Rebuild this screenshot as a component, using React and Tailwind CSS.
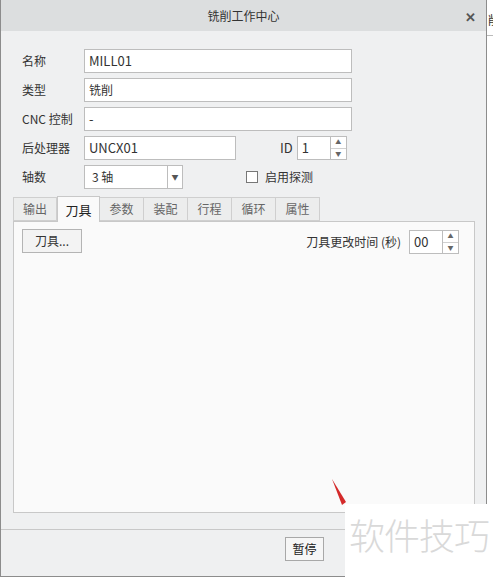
import React from 'react';

const font = { fontFamily: '"Noto Sans CJK SC", "Noto Sans", sans-serif' };

const Spinner = ({ value, width }) => (
  <div className={`flex h-[24px] border border-[#bdbdbd] bg-white ${width}`}>
    <div className="flex-1 pl-[4px] text-[13px] leading-[22px] text-[#333]">{value}</div>
    <div className="flex w-[16px] flex-col border-l border-[#bdbdbd]">
      <div className="flex flex-1 items-center justify-center border-b border-[#d0d0d0] text-[6px] leading-none text-[#666]">▲</div>
      <div className="flex flex-1 items-center justify-center text-[6px] leading-none text-[#666]">▼</div>
    </div>
  </div>
);

const Field = ({ label, children }) => (
  <div className="flex h-[24px] items-center">
    <div className="w-[83px] shrink-0 whitespace-nowrap pl-[21px] text-[12px] text-[#333]">{label}</div>
    {children}
  </div>
);

const tabs = ['输出', '刀具', '参数', '装配', '行程', '循环', '属性'];

export default function App() {
  return (
    <div className="relative h-[577px] w-[493px] overflow-hidden bg-white" style={font}>
      {/* dialog */}
      <div className="flex h-[577px] w-[487px] flex-col border-b border-l border-r border-[#8c8c8c] bg-[#eff0f1]">
        <div className="relative flex h-[31px] shrink-0 items-center justify-center bg-[#dcdedf]">
          <span className="text-[12px] text-[#333]">铣削工作中心</span>
          <span className="absolute right-[10px] top-[7px] text-[13px] font-bold text-[#555]">✕</span>
        </div>

        <div className="flex flex-col gap-[5px] pt-[18px]">
          <Field label="名称">
            <div className="h-[24px] w-[268px] border border-[#bdbdbd] bg-white pl-[4px] text-[13px] leading-[22px] text-[#333]">MILL01</div>
          </Field>
          <Field label="类型">
            <div className="h-[24px] w-[268px] border border-[#bdbdbd] bg-white pl-[4px] text-[12px] leading-[22px] text-[#333]">铣削</div>
          </Field>
          <Field label="CNC 控制">
            <div className="h-[24px] w-[268px] border border-[#bdbdbd] bg-white pl-[4px] text-[13px] leading-[22px] text-[#333]">-</div>
          </Field>
          <Field label="后处理器">
            <div className="h-[24px] w-[152px] border border-[#bdbdbd] bg-white pl-[4px] text-[13px] leading-[22px] text-[#333]">UNCX01</div>
            <span className="ml-[44px] mr-[4px] text-[13px] text-[#333]">ID</span>
            <Spinner value="1" width="w-[50px]" />
          </Field>
          <Field label="轴数">
            <div className="flex h-[24px] w-[99px] border border-[#bdbdbd] bg-white">
              <div className="flex-1 pl-[7px] text-[12px] leading-[22px] text-[#333]">3 轴</div>
              <div className="flex w-[15px] items-center justify-center border-l border-[#bdbdbd] text-[7px] text-[#555]">▼</div>
            </div>
            <div className="ml-[63px] h-[12px] w-[12px] border border-[#777] bg-white" />
            <span className="ml-[7px] text-[12px] text-[#333]">启用探测</span>
          </Field>
        </div>

        {/* tabs */}
        <div className="mt-[7px] flex h-[25px] items-end pl-[12px]">
          {tabs.map((t, i) =>
            i === 1 ? (
              <div key={t} className="relative z-10 -mb-px flex h-[26px] w-[43px] items-center justify-center border border-b-0 border-[#c8c8c8] bg-[#fafafa] text-[13px] text-[#222]">
                {t}
              </div>
            ) : (
              <div key={t} className="flex h-[24px] w-[44px] items-center justify-center border border-[#cfcfcf] border-l-0 first:border-l bg-[#eceded] text-[12px] text-[#666]">
                {t}
              </div>
            )
          )}
        </div>

        <div className="ml-[12px] flex h-[292px] w-[462px] items-start justify-between border border-[#c8c8c8] bg-[#fafafa] px-[8px] pt-[7px]">
          <div className="flex h-[24px] w-[60px] items-center justify-center border border-[#b4b4b4] bg-[#f3f3f3] text-[12px] text-[#333]">刀具...</div>
          <div className="mr-[7px] mt-[1px] flex items-center">
            <span className="mr-[8px] text-[12px] text-[#333]">刀具更改时间 (秒)</span>
            <Spinner value="00" width="w-[50px]" />
          </div>
        </div>

        <div className="mt-[16px] border-t border-[#c8c8c8]" />
        <div className="flex justify-end pr-[162px] pt-[7px]">
          <div className="flex h-[24px] w-[39px] items-center justify-center border border-[#a8a8a8] bg-[#f6f6f6] text-[12px] text-[#222]">暂停</div>
        </div>
      </div>

      {/* background window peeking on the right */}
      <div className="absolute left-[487px] top-[6px] h-[20px] w-[6px] overflow-hidden">
        <span className="ml-[1px] text-[12px] leading-[20px] text-[#333]">削</span>
      </div>
      <div className="absolute left-[487px] top-[35px] h-px w-[6px] bg-[#bbb]" />

      {/* watermark overlay */}
      <svg className="absolute left-[330px] top-[478px]" width="20" height="30" viewBox="0 0 20 30">
        <polygon points="2,1 16,24 12,27" fill="#d42a2a" />
      </svg>
      <div className="absolute left-[345px] top-[504px] flex h-[73px] w-[148px] items-start justify-center bg-white pt-[8px]">
        <span className="text-[36px] font-extralight leading-[44px] tracking-[-1px] text-[#d9d9d9]">软件技巧</span>
      </div>
    </div>
  );
}
